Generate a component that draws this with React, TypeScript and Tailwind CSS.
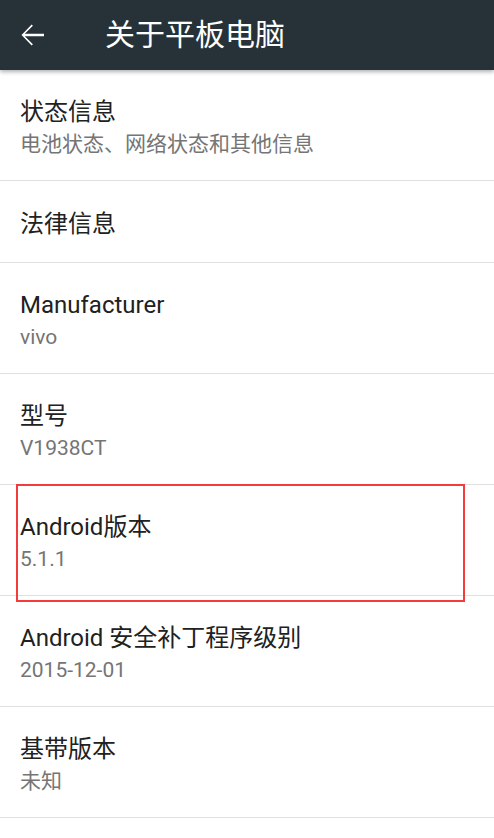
const rows = [
  { title: "状态信息", sub: "电池状态、网络状态和其他信息" },
  { title: "法律信息" },
  { title: "Manufacturer", sub: "vivo" },
  { title: "型号", sub: "V1938CT" },
  { title: "Android版本", sub: "5.1.1" },
  { title: "Android 安全补丁程序级别", sub: "2015-12-01" },
  { title: "基带版本", sub: "未知" },
];

const App = () => {
  return (
    <div className="relative w-[494px] h-[838px] overflow-hidden bg-white font-['Roboto','Noto_Sans_CJK_SC',sans-serif]">
      {/* Toolbar */}
      <header className="relative z-10 flex h-[70px] items-center bg-[#263238] shadow-[0_2px_4px_rgba(0,0,0,0.3)]">
        <svg viewBox="0 0 24 24" className="ml-[14px] h-[36px] w-[36px] fill-white">
          <path d="M20 11.2H7.2l5.4-5.4L11.8 5 5 12l6.8 7 .8-.8-5.4-5.4H20z" />
        </svg>
        <h1 className="ml-[55px] text-[30px] leading-none text-white">关于平板电脑</h1>
      </header>

      {/* List */}
      <div className="flex flex-col">
        {rows.map((row) => (
          <div
            key={row.title}
            className={
              "flex flex-col justify-center border-b border-[#e0e0e0] px-[20px] pt-[4px] " +
              (row.sub ? "h-[111px]" : "h-[82px]")
            }
          >
            <div className="text-[24px] leading-[30px] text-[#212121]">{row.title}</div>
            {row.sub && <div className="mt-[3px] text-[21px] leading-[28px] text-[#757575]">{row.sub}</div>}
          </div>
        ))}
      </div>

      {/* Highlight box */}
      <div className="absolute left-[16px] top-[484px] h-[118px] w-[449px] border-2 border-[#f23b3b]" />
    </div>
  );
};

export default App;
